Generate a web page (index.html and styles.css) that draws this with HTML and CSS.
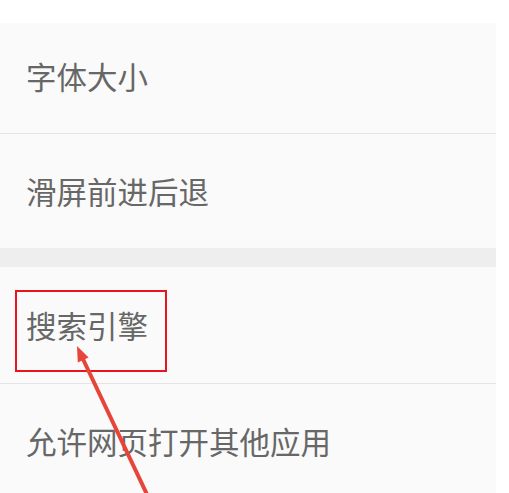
FILE: index.html
```html
<!DOCTYPE html>
<html lang="zh-CN">
<head>
<meta charset="utf-8">
<link rel="stylesheet" href="styles.css">
</head>
<body>
<div class="page">
  <div class="panel">
    <div class="row r1">字体大小</div>
    <div class="divider"></div>
    <div class="row r2">滑屏前进后退</div>
    <div class="band"></div>
    <div class="row r3">搜索引擎</div>
    <div class="divider"></div>
    <div class="row r4">允许网页打开其他应用</div>
  </div>
  <div class="highlight"></div>
  <svg class="arrow" width="509" height="493" viewBox="0 0 509 493">
    <line x1="152" y1="505" x2="82" y2="357" stroke="#e8453a" stroke-width="4" stroke-linecap="round"/>
    <polygon points="77,346 88.6,357.5 77.8,362.6" fill="#e8453a"/>
  </svg>
</div>
</body>
</html>
```
FILE: styles.css
```css
html, body {
  margin: 0;
  padding: 0;
  background: #ffffff;
  overflow: hidden;
}
.page {
  position: relative;
  width: 509px;
  height: 493px;
  padding-top: 23px;
  box-sizing: border-box;
}
.panel {
  width: 496px;
  background: #fafafa;
  display: flex;
  flex-direction: column;
}
.row {
  display: flex;
  align-items: center;
  padding-left: 26px;
  font-family: "Noto Sans CJK SC", sans-serif;
  font-size: 30.5px;
  color: #676767;
  line-height: 1;
}
.r1 { height: 110px; padding-bottom: 3px; box-sizing: border-box; }
.r2 { height: 114px; }
.r3 { height: 116px; }
.r4 { height: 114px; }
.divider {
  height: 1px;
  background: #e4e4e4;
}
.band {
  height: 19px;
  background: #eeeeee;
}
.highlight {
  position: absolute;
  left: 15px;
  top: 290px;
  width: 152px;
  height: 82px;
  box-sizing: border-box;
  border: 2px solid #e8151d;
}
.arrow {
  position: absolute;
  left: 0;
  top: 0;
}
```
